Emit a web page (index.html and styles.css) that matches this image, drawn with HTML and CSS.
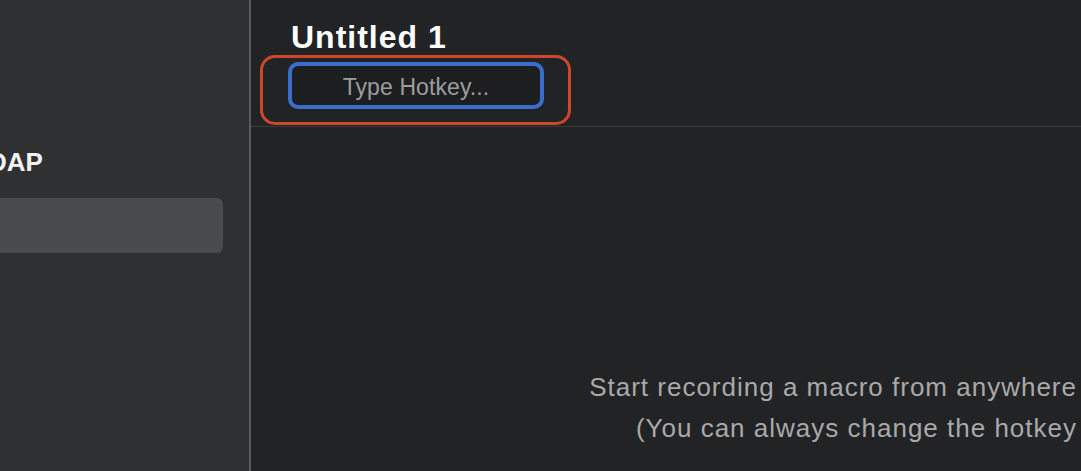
FILE: index.html
```html
<!DOCTYPE html>
<html lang="en">
<head>
<meta charset="utf-8">
<title>Untitled 1</title>
<link rel="stylesheet" href="styles.css">
</head>
<body>
<div class="app">
  <aside class="sidebar">
    <div class="group-title">DAP</div>
    <div class="row selected"></div>
  </aside>
  <main class="main">
    <header class="header">
      <h1 class="title">Untitled 1</h1>
      <div class="annotation">
        <div class="hotkey">Type Hotkey...</div>
      </div>
    </header>
    <section class="content">
      <p class="hint">Start recording a macro from anywhere<br>(You can always change the hotkey</p>
    </section>
  </main>
</div>
</body>
</html>
```

FILE: styles.css
```css
html, body {
  margin: 0;
  padding: 0;
  height: 100%;
  overflow: hidden;
  background: #222325;
  font-family: "Liberation Sans", Arial, Helvetica, sans-serif;
}

.app {
  display: flex;
  height: 471px;
  width: 1081px;
}

.sidebar {
  width: 249px;
  flex: 0 0 249px;
  background: #2f3032;
  border-right: 2px solid #58595b;
  padding-top: 146px;
  overflow: hidden;
}

.group-title {
  margin-left: -12px;
  font-size: 26px;
  font-weight: bold;
  line-height: 32px;
  color: #f2f2f2;
  white-space: nowrap;
}

.row {
  margin-top: 20px;
  width: 223px;
  height: 55px;
  border-radius: 0 6px 6px 0;
}

.row.selected {
  background: #4a4b4d;
}

.main {
  flex: 1;
  display: flex;
  flex-direction: column;
  min-width: 0;
}

.header {
  height: 106px;
  border-bottom: 1px solid #3b3c3e;
  padding: 20px 0 0 9px;
}

.title {
  margin: 0 0 0 31px;
  font-size: 32px;
  letter-spacing: 1px;
  line-height: 34px;
  font-weight: bold;
  color: #ffffff;
}

.annotation {
  margin-top: 1px;
  width: 280px;
  height: 60px;
  border: 3px solid #d0462d;
  border-radius: 15px;
  padding: 4px 0 0 25px;
}

.hotkey {
  width: 248px;
  height: 35px;
  border: 4px solid #3d6dcc;
  border-radius: 10px;
  background: #1d1e20;
  padding-top: 4px;
  text-align: center;
  font-size: 23px;
  letter-spacing: 0.1px;
  line-height: 34px;
  color: #9d9d9d;
}

.content {
  flex: 1;
  padding: 240px 4px 0 0;
}

.hint {
  margin: 0;
  text-align: right;
  font-size: 26px;
  letter-spacing: 1px;
  line-height: 41px;
  color: #a9a9aa;
  white-space: nowrap;
}
```
